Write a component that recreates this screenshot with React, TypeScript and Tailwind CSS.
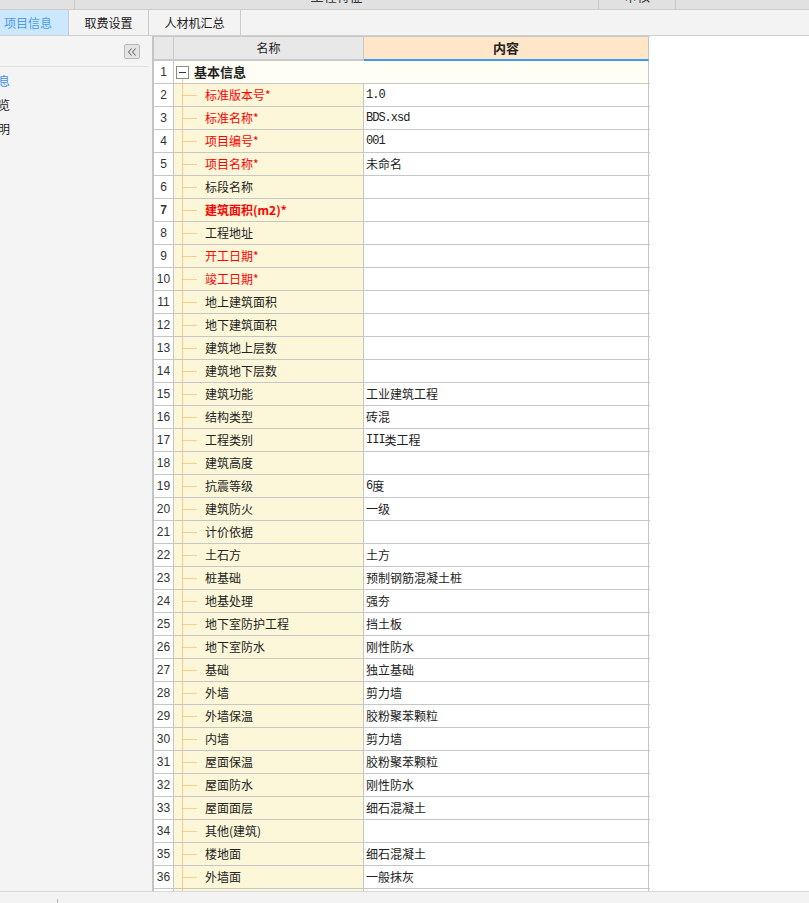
import React from 'react'

type Row = {
  name: string
  value?: string
  red?: boolean
  bold?: boolean
}

const rows: Row[] = [
  { name: '标准版本号*', value: '1.0', red: true },
  { name: '标准名称*', value: 'BDS.xsd', red: true },
  { name: '项目编号*', value: '001', red: true },
  { name: '项目名称*', value: '未命名', red: true },
  { name: '标段名称' },
  { name: '建筑面积(m2)*', red: true, bold: true },
  { name: '工程地址' },
  { name: '开工日期*', red: true },
  { name: '竣工日期*', red: true },
  { name: '地上建筑面积' },
  { name: '地下建筑面积' },
  { name: '建筑地上层数' },
  { name: '建筑地下层数' },
  { name: '建筑功能', value: '工业建筑工程' },
  { name: '结构类型', value: '砖混' },
  { name: '工程类别', value: 'III类工程' },
  { name: '建筑高度' },
  { name: '抗震等级', value: '6度' },
  { name: '建筑防火', value: '一级' },
  { name: '计价依据' },
  { name: '土石方', value: '土方' },
  { name: '桩基础', value: '预制钢筋混凝土桩' },
  { name: '地基处理', value: '强夯' },
  { name: '地下室防护工程', value: '挡土板' },
  { name: '地下室防水', value: '刚性防水' },
  { name: '基础', value: '独立基础' },
  { name: '外墙', value: '剪力墙' },
  { name: '外墙保温', value: '胶粉聚苯颗粒' },
  { name: '内墙', value: '剪力墙' },
  { name: '屋面保温', value: '胶粉聚苯颗粒' },
  { name: '屋面防水', value: '刚性防水' },
  { name: '屋面面层', value: '细石混凝土' },
  { name: '其他(建筑)' },
  { name: '楼地面', value: '细石混凝土' },
  { name: '外墙面', value: '一般抹灰' },
  { name: '' },
]

const cjk = "font-['Microsoft_YaHei','Noto_Sans_CJK_SC',sans-serif]"

// ascii runs get a narrow mono face, like the old SimSun cells
function Value({ text }: { text?: string }) {
  if (!text) return null
  const parts = text.match(/[\x00-\x7f]+|[^\x00-\x7f]+/g) || []
  return (
    <>
      {parts.map((p, i) =>
        /^[\x00-\x7f]+$/.test(p) ? (
          <span key={i} className="font-['Liberation_Mono',monospace] text-[12px] tracking-[-1px]">
            {p}
          </span>
        ) : (
          <span key={i}>{p}</span>
        ),
      )}
    </>
  )
}

function TreeStub() {
  return (
    <div className="ml-[8px] flex h-full w-[23px] shrink-0 items-center border-l border-[#ffcb85]">
      <span className="h-px w-[14px] bg-[#ffcb85]" />
    </div>
  )
}

function DataRow({ row, index }: { row: Row; index: number }) {
  return (
    <div className="flex h-[23px] shrink-0 border-b border-[#c6c6c6]">
      <div
        className={`flex w-[20px] shrink-0 items-center justify-center border-r border-[#c6c6c6] bg-white text-[12px] text-[#333] font-['Liberation_Sans',sans-serif] ${row.bold ? 'font-bold' : ''}`}
      >
        {row.name ? index : ''}
      </div>
      <div className="flex w-[190px] shrink-0 items-center border-r border-[#c6c6c6] bg-[#fcf7d9]">
        <TreeStub />
        <span
          className={`whitespace-nowrap text-[12px] ${row.red ? 'text-[#ff0000]' : 'text-[#222]'} ${row.bold ? 'font-bold' : ''}`}
        >
          {row.name}
        </span>
      </div>
      <div className="flex w-[285px] shrink-0 items-center border-r border-[#c6c6c6] bg-white pl-[2px] text-[12px] text-[#222]">
        <Value text={row.value} />
      </div>
    </div>
  )
}

export default function App() {
  return (
    <div className={`flex h-[903px] w-[809px] flex-col overflow-hidden bg-white ${cjk}`}>
      {/* top strip, mostly scrolled off */}
      <div className="flex h-[10px] shrink-0 border-b border-[#cdcdcd] bg-[#e1e1e1] text-[13px] text-[#333]">
        <div className="w-[75px] shrink-0 border-r border-[#c9c9c9]" />
        <div className="flex h-[9px] w-[524px] shrink-0 items-end justify-center overflow-hidden border-r border-[#c9c9c9]">
          <span className="mb-[5px] whitespace-nowrap leading-[16px]">工程特征</span>
        </div>
        <div className="flex h-[9px] w-[77px] shrink-0 items-end justify-center overflow-hidden border-r border-[#c9c9c9]">
          <span className="mb-[5px] whitespace-nowrap leading-[16px]">审核</span>
        </div>
      </div>

      {/* tabs */}
      <div className="flex h-[26px] shrink-0 border-b border-[#cfcfcf] bg-[#f3f3f3] text-[12px]">
        <div className="flex w-[69px] shrink-0 items-center border-r border-[#cbcbcb] bg-[#cce8ff] pl-[4px] text-[#4b9be6]">
          项目信息
        </div>
        <div className="flex w-[80px] shrink-0 items-center justify-center border-r border-[#cbcbcb] text-[#222]">
          取费设置
        </div>
        <div className="flex w-[92px] shrink-0 items-center justify-center border-r border-[#cbcbcb] text-[#222]">
          人材机汇总
        </div>
      </div>

      {/* main */}
      <div className="flex min-h-0 flex-1">
        <div className="flex w-[152px] shrink-0 flex-col bg-[#f4f4f4]">
          <div className="flex h-[31px] w-[149px] shrink-0 items-center justify-end border-b border-[#e0e0e0] pr-[9px] pt-[1px]">
            <div className="flex h-[15px] w-[16px] items-center justify-center rounded-[2px] border border-[#b9b9b9] bg-[#e4e4e4]">
              <svg width="10" height="8" viewBox="0 0 10 8" fill="none" stroke="#555" strokeWidth="1">
                <path d="M4.5 0.5 L1.5 4 L4.5 7.5" />
                <path d="M8.5 0.5 L5.5 4 L8.5 7.5" />
              </svg>
            </div>
          </div>
          <div className="flex flex-col pt-[2px] text-[12px]">
            <div className="flex h-[24px] w-[10px] items-center justify-end overflow-hidden whitespace-nowrap text-[#3b8fe0]">
              工程信息
            </div>
            <div className="flex h-[24px] w-[10px] items-center justify-end overflow-hidden whitespace-nowrap text-[#222]">
              编制概览
            </div>
            <div className="flex h-[24px] w-[10px] items-center justify-end overflow-hidden whitespace-nowrap text-[#222]">
              编制说明
            </div>
          </div>
        </div>

        {/* grid */}
        <div className="flex w-[498px] shrink-0 flex-col overflow-hidden border-l-2 border-[#c4c4c4]">
          <div className="flex h-[25px] shrink-0 border-t border-[#c8c8c8]">
            <div className="w-[20px] shrink-0 border-r border-b-2 border-[#c8c8c8] bg-[#e8e8e8]" />
            <div className="flex w-[190px] shrink-0 items-center justify-center border-r border-b-2 border-r-[#c8c8c8] border-b-[#c8c8c8] bg-[#e8e8e8] text-[12px] text-[#222]">
              名称
            </div>
            <div className="flex w-[285px] shrink-0 items-center justify-center border-r border-b-2 border-r-[#c4c4c4] border-b-[#3e98f0] bg-[#ffe6c8] text-[13px] font-bold text-[#222]">
              内容
            </div>
          </div>

          <div className="flex h-[23px] shrink-0 border-b border-[#c6c6c6]">
            <div className="flex w-[20px] shrink-0 items-center justify-center border-r border-[#c6c6c6] bg-white text-[12px] text-[#333] font-['Liberation_Sans',sans-serif]">
              1
            </div>
            <div className="flex w-[475px] shrink-0 items-stretch border-r border-[#c6c6c6] bg-[#fffef4]">
              <div className="ml-[2px] flex w-[13px] shrink-0 flex-col items-center pt-[5px]">
                <div className="flex h-[13px] w-[13px] shrink-0 items-center justify-center border border-[#8a8a8a] bg-white">
                  <span className="h-px w-[7px] bg-[#333]" />
                </div>
                <div className="flex-1 border-l border-[#ffcb85]" />
              </div>
              <span className="ml-[5px] flex items-center whitespace-nowrap text-[13px] font-bold text-[#222]">
                基本信息
              </span>
            </div>
          </div>

          {rows.map((r, i) => (
            <DataRow key={i} row={r} index={i + 2} />
          ))}
        </div>

        <div className="flex-1 bg-white" />
      </div>

      {/* status bar */}
      <div className="flex h-[12px] shrink-0 border-t border-[#d8d8d8] bg-[#f3f3f3]">
        <div className="w-[57px] shrink-0" />
        <div className="h-[4px] self-end border-l border-[#b5b5b5]" />
      </div>
    </div>
  )
}
